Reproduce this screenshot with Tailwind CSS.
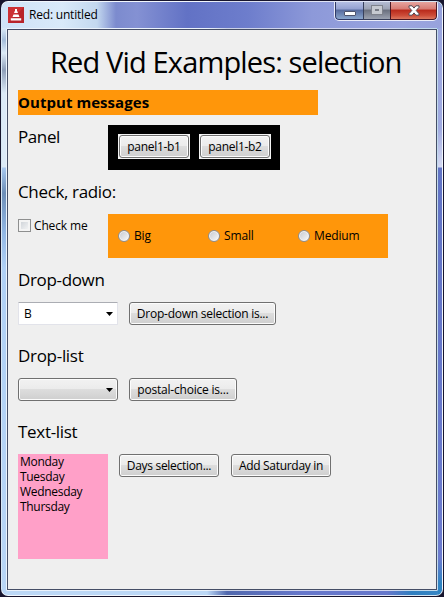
<!DOCTYPE html>
<html lang="en">
<head>
<meta charset="utf-8">
<title>Red: untitled</title>
<script src="https://cdn.jsdelivr.net/npm/@tailwindcss/browser@4"></script>
</head>
<body class="w-[444px] h-[597px] overflow-hidden bg-[#17152e] font-['Open_Sans','Noto_Sans',sans-serif] text-black">
<div class="w-[442px] h-[595px] mt-px ml-px rounded-[7px] border border-white/80 bg-[linear-gradient(90deg,#bcd8f6_0px,#bcd8f6_205px,#5168ae_225px,#6677cb_300px,#6677cb_385px,#2f7fc0_410px,#3988c6_443px)] overflow-hidden flex flex-col">
  <!-- title bar -->
  <header class="h-[26px] shrink-0 flex items-start bg-[linear-gradient(90deg,#cfe2f7_0px,#d9eafa_60px,#c3d8ef_95px,#7c8bce_114px,#8491d3_135px,#6272c5_185px,#6d7dcc_245px,#8d99d9_310px,#9ba6df_400px,#97a2dc_443px)]">
    <svg class="ml-[6px] mt-[5px] w-4 h-4 shrink-0" viewBox="0 0 16 16"><rect width="16" height="16" fill="#b8242a"/><path d="M0 16V0h16z" fill="#d8393c" opacity=".6"/><path d="M7 2h2v2.500h.8v1.500H6.200V4.500H7zM5.500 7.500h5L11.500 10h-7zM2.800 11.200h10.400v2.300H2.800z" fill="#fff"/></svg>
    <span class="ml-[5px] mt-[4px] w-[190px] text-[12px] leading-[18px] tracking-[-0.2px] whitespace-nowrap">Red: untitled</span>
    <div class="ml-auto mr-[4px] -mt-px h-[20px] w-[104px] shrink-0 flex rounded-b-[5px] border border-t-0 border-white/80 overflow-hidden">
      <div class="w-[28px] border-l border-b border-[#303a66] rounded-bl-[4px] bg-[linear-gradient(#b9c3e6_0%,#93a0d0_45%,#566a9d_50%,#8ba7cd_100%)] flex justify-center items-end pb-[3px]"><i class="block w-3 h-[5px] bg-white border border-[#50566e] rounded-[1px]"></i></div>
      <div class="w-[27px] border-l border-b border-[#38405c] bg-[linear-gradient(#b6bed6_0%,#9ca1b2_45%,#6a6f7e_50%,#9ca2b0_100%)] flex justify-center items-center"><i class="block w-[10px] h-[8px] border-[3px] border-[#c6c9d0] outline outline-[#7f828c] bg-[#777a84]"></i></div>
      <div class="grow border-l border-r border-b border-[#4b1824] rounded-br-[4px] bg-[linear-gradient(#e8aaa5_0%,#d77a72_45%,#b9291b_50%,#cd4c38_80%,#dc7860_100%)] flex justify-center items-center"><svg class="w-[12px] h-[11px]" viewBox="0 0 12 11"><path d="M1 .8h3.1L6 3.1 7.900 .8H11v1.5L8.200 5.500 11 8.700v1.500H7.900L6 7.900 4.100 10.200H1V8.700l2.800-3.200L1 2.300z" fill="#fff" stroke="#514750"/></svg></div>
    </div>
  </header>
  <div class="flex grow min-h-0">
    <div class="w-[4px] shrink-0 bg-[linear-gradient(#dceaf7_0px,#a5bdda_12px,#dceaf7_25px,#8f9fb9_42px,#dceaf7_65px,#dceaf7_139px,#a8c8ef_140px,#6d8eb8_165px,#92b7e5_205px,#b0d0f5_240px,#b8d5f5_560px)]"></div>
    <!-- client area -->
    <main class="w-[432px] h-[563px] shrink-0 border border-white/70 rounded-[1px]">
      <div class="h-full border border-[#454e66] bg-[#efefef] pl-[10px] flex flex-col">
        <h1 class="h-[60px] shrink-0 pl-[32px] pt-[12px] text-[29px] leading-[40px] font-normal tracking-[-0.85px] whitespace-nowrap">Red Vid Examples: selection</h1>
        <div class="w-[300px] h-[25px] shrink-0 bg-[#ff960a] text-[15px] leading-[24px] font-bold tracking-[0.05px] whitespace-nowrap">Output messages</div>
        <div class="flex mt-[10px] h-[45px] shrink-0">
          <div class="w-[90px] text-[17px] leading-[24px] tracking-[-0.4px]">Panel</div>
          <div class="w-[172px] h-[45px] bg-black flex items-start gap-[9px] pl-[10px] pt-[9px] text-[12px]">
            <button class="w-[72px] h-[25px] bg-[#f4f4f4] p-px flex"><span class="grow h-[23px] border border-[#707070] rounded-[3px] shadow-[inset_0_0_0_1px_#fcfcfc] bg-[linear-gradient(#f2f2f2_0%,#ebebeb_48%,#dddddd_50%,#cfcfcf_100%)] leading-[22px] tracking-[-0.3px] whitespace-nowrap">panel1-b1</span></button>
            <button class="w-[72px] h-[25px] bg-[#f4f4f4] p-px flex"><span class="grow h-[23px] border border-[#707070] rounded-[3px] shadow-[inset_0_0_0_1px_#fcfcfc] bg-[linear-gradient(#f2f2f2_0%,#ebebeb_48%,#dddddd_50%,#cfcfcf_100%)] leading-[22px] tracking-[-0.3px] whitespace-nowrap">panel1-b2</span></button>
          </div>
        </div>
        <div class="mt-[10px] h-[34px] shrink-0 text-[17px] leading-[24px] tracking-[-0.35px]">Check, radio:</div>
        <div class="flex h-[44px] shrink-0 text-[12px] tracking-[-0.15px]">
          <div class="w-[90px] flex items-start pt-[5px]"><i class="block w-[13px] h-[13px] border border-[#8e8f8f] bg-[linear-gradient(135deg,#c8cdd3,#fafafa)] shadow-[inset_0_0_0_2px_#f4f4f4]"></i><span class="ml-[3px] -mt-[1px] leading-[15px] whitespace-nowrap">Check me</span></div>
          <div class="w-[280px] bg-[#ff960a] flex items-center pl-[10px]">
            <div class="w-[90px] flex items-center"><i class="block w-3 h-3 rounded-full border border-[#8e8f8f] bg-[linear-gradient(135deg,#c3c8ce,#fafafa)] shadow-[inset_0_0_0_1px_#f4f4f4]"></i><span class="ml-1 leading-[16px]">Big</span></div>
            <div class="w-[90px] flex items-center"><i class="block w-3 h-3 rounded-full border border-[#8e8f8f] bg-[linear-gradient(135deg,#c3c8ce,#fafafa)] shadow-[inset_0_0_0_1px_#f4f4f4]"></i><span class="ml-1 leading-[16px]">Small</span></div>
            <div class="w-[90px] flex items-center"><i class="block w-3 h-3 rounded-full border border-[#8e8f8f] bg-[linear-gradient(135deg,#c3c8ce,#fafafa)] shadow-[inset_0_0_0_1px_#f4f4f4]"></i><span class="ml-1 leading-[16px]">Medium</span></div>
          </div>
        </div>
        <div class="mt-[10px] h-[34px] shrink-0 text-[17px] leading-[24px] tracking-[-0.35px]">Drop-down</div>
        <div class="flex h-[23px] shrink-0 gap-[11px] text-[12px]">
          <div class="w-[100px] bg-white border border-[#e2e3ea] border-t-[#abadb3] rounded-[1px] pl-[5px] pr-[4px] flex items-center justify-between"><span class="leading-[20px]">B</span><svg class="w-[7px] h-[4px]" viewBox="0 0 7 4"><path d="M0 0h7L3.500 4z"/></svg></div>
          <button class="w-[147px] border border-[#707070] rounded-[3px] shadow-[inset_0_0_0_1px_#fcfcfc] bg-[linear-gradient(#f2f2f2_0%,#ebebeb_48%,#dddddd_50%,#cfcfcf_100%)] leading-[22px] tracking-[-0.25px] whitespace-nowrap">Drop-down selection is...</button>
        </div>
        <div class="mt-[19px] h-[34px] shrink-0 text-[17px] leading-[24px] tracking-[-0.3px]">Drop-list</div>
        <div class="flex h-[23px] shrink-0 gap-[11px] text-[12px]">
          <div class="w-[100px] border border-[#707070] rounded-[3px] shadow-[inset_0_0_0_1px_#fcfcfc] bg-[linear-gradient(#f2f2f2_0%,#ebebeb_48%,#dddddd_50%,#cfcfcf_100%)] pr-[4px] flex items-center justify-end"><svg class="w-[7px] h-[4px]" viewBox="0 0 7 4"><path d="M0 0h7L3.500 4z"/></svg></div>
          <button class="w-[108px] border border-[#707070] rounded-[3px] shadow-[inset_0_0_0_1px_#fcfcfc] bg-[linear-gradient(#f2f2f2_0%,#ebebeb_48%,#dddddd_50%,#cfcfcf_100%)] leading-[22px] tracking-[-0.2px] whitespace-nowrap">postal-choice is...</button>
        </div>
        <div class="mt-[19px] h-[34px] shrink-0 text-[17px] leading-[24px] tracking-[-0.3px]">Text-list</div>
        <div class="flex items-start shrink-0 text-[12px]">
          <ul class="w-[90px] h-[105px] bg-[#ffa0c8] pl-[2px] leading-[15px] tracking-[-0.3px]"><li>Monday</li><li>Tuesday</li><li>Wednesday</li><li>Thursday</li></ul>
          <button class="ml-[11px] w-[100px] h-[23px] border border-[#707070] rounded-[3px] shadow-[inset_0_0_0_1px_#fcfcfc] bg-[linear-gradient(#f2f2f2_0%,#ebebeb_48%,#dddddd_50%,#cfcfcf_100%)] leading-[22px] tracking-[-0.3px] whitespace-nowrap">Days selection...</button>
          <button class="ml-[12px] w-[100px] h-[23px] border border-[#707070] rounded-[3px] shadow-[inset_0_0_0_1px_#fcfcfc] bg-[linear-gradient(#f2f2f2_0%,#ebebeb_48%,#dddddd_50%,#cfcfcf_100%)] leading-[22px] tracking-[-0.3px] whitespace-nowrap">Add Saturday in</button>
        </div>
      </div>
    </main>
    <div class="grow bg-[linear-gradient(#9ba6df_0px,#a0aae0_100px,#d5daf2_139px,#6274c5_140px,#6d7ccf_530px,#2f84c2_555px)]"></div>
  </div>
</div>
</body>
</html>
